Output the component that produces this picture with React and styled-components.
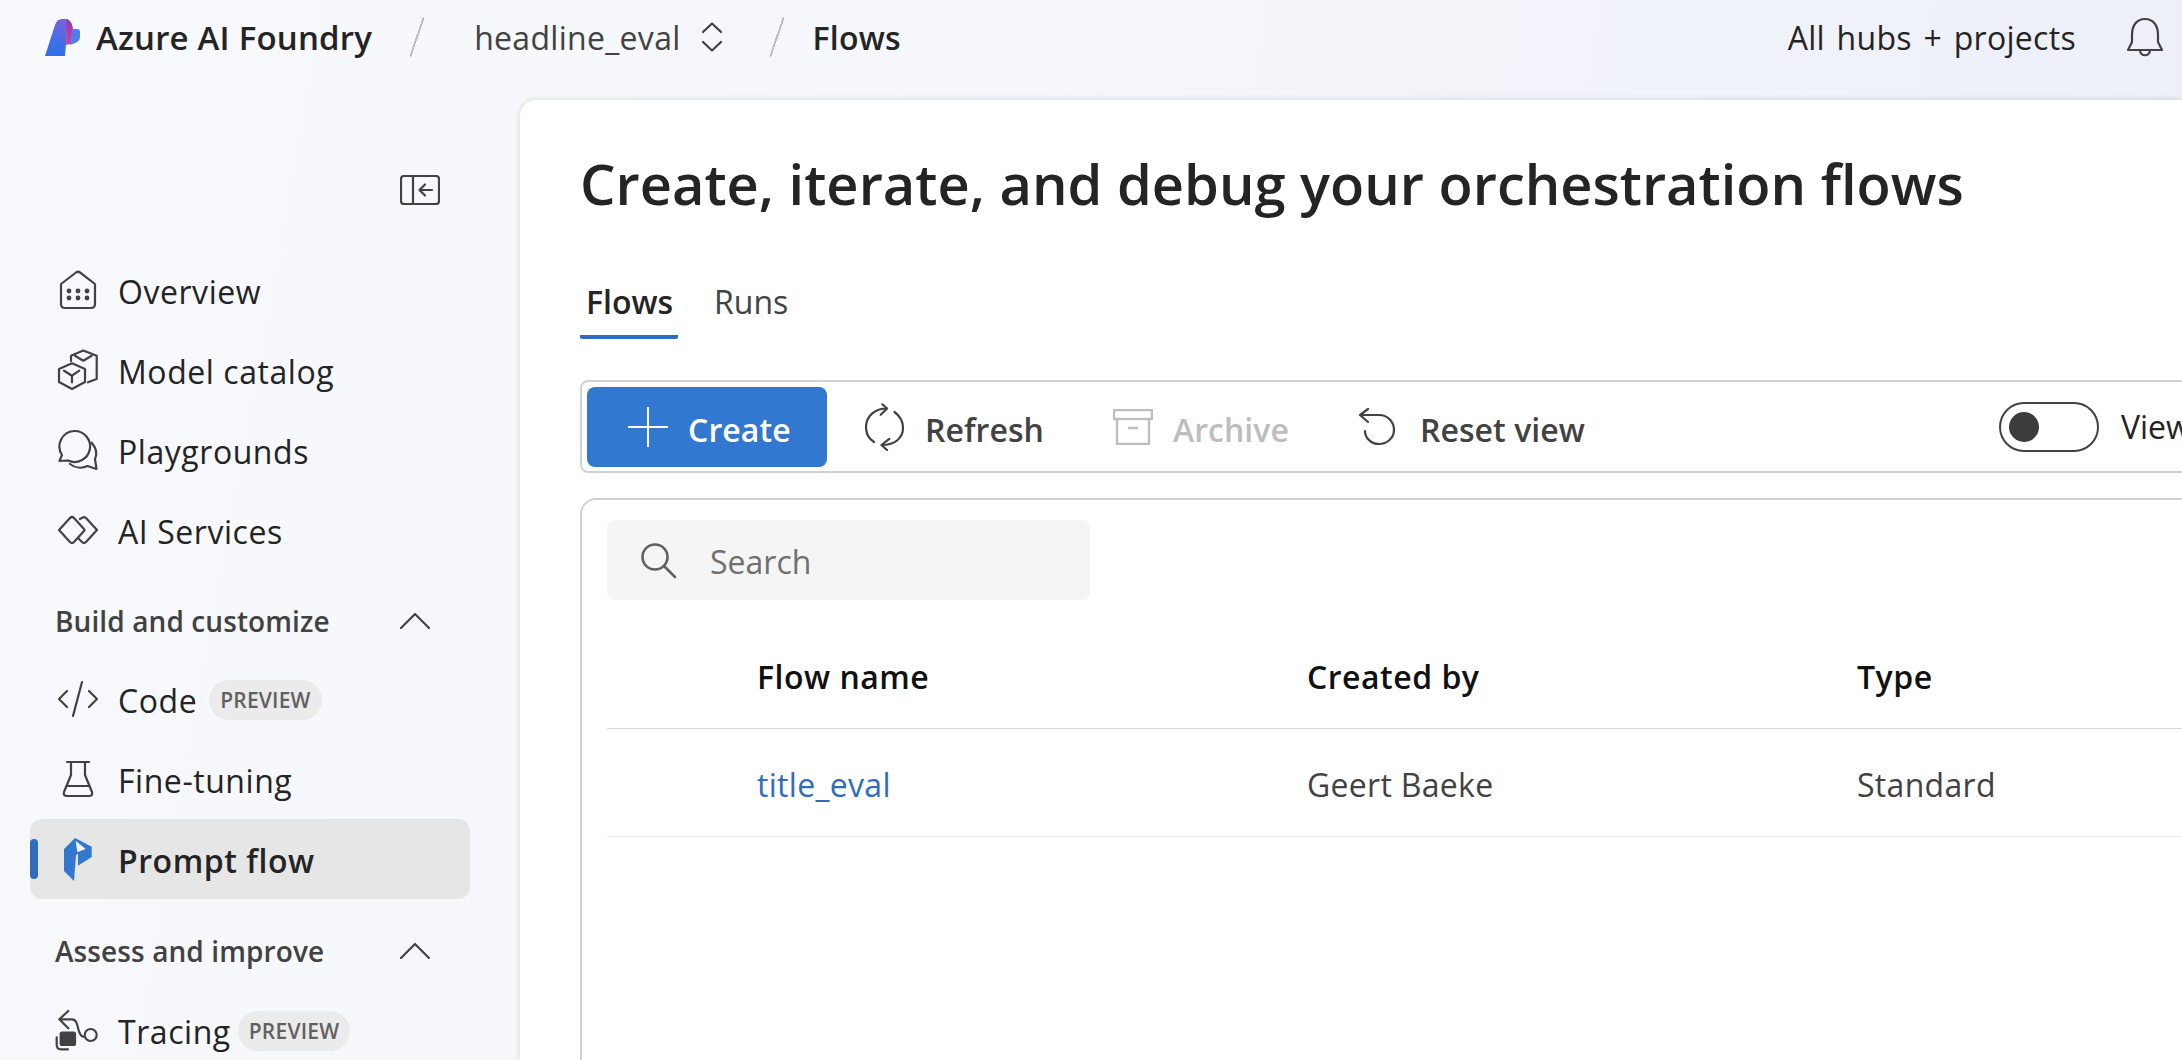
import React from "react";
import styled, { createGlobalStyle } from "styled-components";

const GlobalStyle = createGlobalStyle`
  html, body { margin: 0; padding: 0; height: 100%; overflow: hidden; }
  body { font-family: "Open Sans", "Noto Sans", sans-serif; color: #242424; }
  #root { height: 100%; }
`;

const Page = styled.div`
  width: 2182px;
  height: 1060px;
  overflow: hidden;
  display: flex;
  flex-direction: column;
  background: linear-gradient(100deg, #f7f9fd 0%, #f5f7fb 40%, #eceff8 100%);
`;

const Header = styled.header`
  height: 100px;
  flex: none;
  display: flex;
  align-items: center;
  padding: 0 18px 26px 45px;
  box-sizing: border-box;
`;

const Brand = styled.div`
  display: flex;
  align-items: center;
  gap: 15px;
  font-size: 33px;
  font-weight: 600;
  letter-spacing: 0.2px;
`;

const Slash = styled.div`
  width: 14px;
  height: 40px;
  margin: ${(p) => p.$margin};
  background: linear-gradient(to bottom right, transparent calc(50% - 1px), #bdbdbd calc(50% - 1px), #bdbdbd calc(50% + 1px), transparent calc(50% + 1px));
`;

const Crumb = styled.span`
  font-size: 32px;
  color: #424242;
  letter-spacing: 0.3px;
`;

const ChevronSlot = styled.span`
  width: 40px;
  height: 40px;
  margin-left: 11px;
  display: flex;
  align-items: center;
  justify-content: center;
`;

const CurrentCrumb = styled.span`
  font-size: 32px;
  font-weight: 600;
  letter-spacing: 0.2px;
`;

const HeaderRight = styled.div`
  margin-left: auto;
  display: flex;
  align-items: center;
  gap: 50px;
  font-size: 32px;
  letter-spacing: 0.3px;
  word-spacing: 3px;
`;

const Body = styled.div`
  flex: 1;
  display: flex;
  min-height: 0;
`;

const Sidebar = styled.nav`
  width: 520px;
  flex: none;
  padding: 0 0 0 30px;
  box-sizing: border-box;
`;

const CollapseRow = styled.div`
  height: 150px;
  width: 410px;
  display: flex;
  justify-content: flex-end;
  padding-top: 75px;
  box-sizing: border-box;
`;

const NavItem = styled.div`
  position: relative;
  width: 440px;
  height: 80px;
  display: flex;
  align-items: center;
  gap: 20px;
  padding: 2px 0 0 28px;
  box-sizing: border-box;
  border-radius: 12px;
  font-size: 32px;
  letter-spacing: 0.55px;
  background: ${(p) => (p.$active ? "#e6e6e6" : "transparent")};
  font-weight: ${(p) => (p.$active ? 600 : 400)};
  &::before {
    content: "";
    display: ${(p) => (p.$active ? "block" : "none")};
    position: absolute;
    left: 0;
    top: 20px;
    width: 8px;
    height: 40px;
    border-radius: 4px;
    background: #2f6cbd;
  }
`;

const IconSlot = styled.span`
  width: 40px;
  height: 40px;
  flex: none;
  margin-top: -2px;
  display: flex;
  align-items: center;
  justify-content: center;
  svg { display: block; overflow: visible; }
`;

const Pill = styled.span`
  height: 40px;
  display: flex;
  align-items: center;
  padding: 0 11px;
  margin-left: ${(p) => p.$shift || "-8px"};
  border-radius: 20px;
  background: #ebebeb;
  color: #616161;
  font-size: 21px;
  font-weight: 600;
  letter-spacing: 0.2px;
`;

const SectionTitle = styled.div`
  width: 400px;
  height: 60px;
  margin: ${(p) => p.$margin};
  padding-left: 25px;
  box-sizing: border-box;
  display: flex;
  align-items: center;
  justify-content: space-between;
  font-size: 28px;
  font-weight: 600;
  letter-spacing: 0.1px;
  color: #424242;
`;

const Main = styled.main`
  flex: 1;
  background: #fff;
  border-top-left-radius: 16px;
  box-shadow: 0 0 6px rgba(0, 0, 0, 0.14);
  padding: 0 0 0 60px;
  overflow: hidden;
`;

const Title = styled.h1`
  margin: 45px 0 0;
  font-size: 56px;
  line-height: 76px;
  font-weight: 600;
  color: #242424;
  white-space: nowrap;
`;

const Tabs = styled.div`
  display: flex;
  margin-top: 48px;
  height: 70px;
`;

const Tab = styled.div`
  width: ${(p) => p.$width};
  padding-left: 6px;
  box-sizing: border-box;
  font-size: 32px;
  line-height: 66px;
  font-weight: ${(p) => (p.$active ? 600 : 400)};
  color: ${(p) => (p.$active ? "#242424" : "#424242")};
  border-bottom: ${(p) => (p.$active ? "4px solid #2f6cbd" : "none")};
  border-radius: 2px;
  margin-right: 30px;
`;

const Toolbar = styled.div`
  width: 1700px;
  height: 93px;
  margin-top: 41px;
  border: 2px solid #d1d1d1;
  border-radius: 8px;
  box-sizing: border-box;
  display: flex;
  align-items: center;
  padding: 0 5px;
  gap: 38px;
`;

const PrimaryButton = styled.div`
  width: 240px;
  height: 80px;
  border-radius: 8px;
  background: #3277d0;
  color: #fff;
  display: flex;
  align-items: center;
  gap: 19px;
  padding-left: 40px;
  box-sizing: border-box;
  font-size: 32px;
  font-weight: 600;
  letter-spacing: 0.1px;
`;

const ToolButton = styled.div`
  display: flex;
  align-items: center;
  gap: ${(p) => p.$gap || "20px"};
  font-size: 32px;
  font-weight: 600;
  letter-spacing: 0.05px;
  color: ${(p) => (p.$disabled ? "#bdbdbd" : "#424242")};
  & + & { margin-left: 31px; }
`;

const ButtonLabel = styled.span`
  margin-top: 5px;
`;

const ToggleWrap = styled.div`
  margin-left: 376px;
  display: flex;
  align-items: center;
  gap: 22px;
  font-size: 32px;
  color: #242424;
`;

const Toggle = styled.div`
  width: 100px;
  height: 50px;
  border: 2px solid #424242;
  border-radius: 25px;
  box-sizing: border-box;
  display: flex;
  align-items: center;
  padding-left: 8px;
  &::before {
    content: "";
    width: 30px;
    height: 30px;
    border-radius: 50%;
    background: #3c3c3c;
  }
`;

const TableCard = styled.div`
  width: 1700px;
  height: 700px;
  margin-top: 25px;
  border: 2px solid #d1d1d1;
  border-radius: 16px;
  box-sizing: border-box;
  padding: 20px 0 0 25px;
`;

const SearchBox = styled.div`
  width: 483px;
  height: 80px;
  border-radius: 8px;
  background: #f5f5f5;
  display: flex;
  align-items: center;
  gap: 33px;
  padding: 2px 0 0 34px;
  box-sizing: border-box;
  font-size: 32px;
  color: #707070;
`;

const Row = styled.div`
  display: grid;
  grid-template-columns: 550px 550px 1fr;
  padding: ${(p) => (p.$head ? "24px" : "4px")} 0 0 150px;
  box-sizing: border-box;
  height: ${(p) => p.$height};
  align-items: center;
  border-bottom: 1px solid ${(p) => (p.$head ? "#d6d6d6" : "#ebebeb")};
  font-size: 32px;
  font-weight: ${(p) => (p.$head ? 600 : 400)};
  color: ${(p) => (p.$head ? "#111" : "#424242")};
  letter-spacing: ${(p) => (p.$head ? "0.5px" : "0.3px")};
`;

const FlowLink = styled.span`
  color: #2f6cbd;
`;

const stroke = { fill: "none", stroke: "#424242", strokeWidth: 2.2, strokeLinecap: "round", strokeLinejoin: "round" };

const Logo = () => (
  <svg width="36" height="37" viewBox="0 0 36 37">
    <defs>
      <linearGradient id="lg1" x1="0.6" y1="0" x2="0.4" y2="1">
        <stop offset="0" stopColor="#7a62dc" />
        <stop offset="0.6" stopColor="#3f6fe6" />
        <stop offset="1" stopColor="#2f6ee8" />
      </linearGradient>
      <linearGradient id="lg2" x1="0" y1="0" x2="0" y2="1">
        <stop offset="0" stopColor="#8f3aa8" />
        <stop offset="1" stopColor="#dd3aa8" />
      </linearGradient>
    </defs>
    <path d="M0 37 L10 6 Q12 0 17 0 L23 0 L20 37 Z" fill="url(#lg1)" />
    <path d="M22 0 Q27 2 28 10 L28 24 L21 26 Z" fill="url(#lg2)" />
    <path d="M27 10 L32 10 Q35 10 35 13 L35 18 Q35 22 30 24 L25 26 Z" fill="#4f7fe8" />
  </svg>
);

const ChevronUpDown = () => (
  <svg width="24" height="30" viewBox="0 0 24 30" {...stroke}>
    <path d="M3 10 L12 1.5 L21 10" />
    <path d="M3 20 L12 28.5 L21 20" />
  </svg>
);

const Bell = () => (
  <svg width="38" height="40" viewBox="0 0 38 40" {...stroke}>
    <path d="M6 18 C6 8 11 2 19 2 C27 2 32 8 32 18 L32 25 L36 33 L2 33 L6 25 Z" />
    <path d="M14 33 C14 40 24 40 24 33" />
  </svg>
);

const CollapseIcon = () => (
  <svg width="40" height="30" viewBox="0 0 40 30" {...stroke}>
    <rect x="1" y="1" width="38" height="28" rx="3" />
    <path d="M13 1 V29" />
    <path d="M32 15 H20 M25 9.5 L19.5 15 L25 20.5" />
  </svg>
);

const HomeIcon = () => (
  <svg width="36" height="38" viewBox="0 0 36 38" {...stroke}>
    <path d="M1 13 L16 1.5 Q18 0 20 1.5 L35 13 V33 Q35 37 31 37 H5 Q1 37 1 33 Z" />
    <g fill="#424242" stroke="none">
      {[9, 18, 27].map((x) => (
        <React.Fragment key={x}>
          <circle cx={x} cy="20" r="2.4" />
          <circle cx={x} cy="27" r="2.4" />
        </React.Fragment>
      ))}
    </g>
  </svg>
);

const CubesIcon = () => (
  <svg width="40" height="40" viewBox="0 0 40 40" {...stroke}>
    <path d="M1 19 L14 13.3 L27 19 V32 L14 39 L1 32 Z" />
    <path d="M6 20.7 L14 25.7 L21.3 20.7 M14 25.7 V32.3" />
    <path d="M13 11 V5.7 L25.3 0.5 L38.7 5.7 V29 L30 32.3" />
    <path d="M17 5.7 L25.3 10.7 L33.7 5.7" />
  </svg>
);

const ChatIcon = () => (
  <svg width="40" height="40" viewBox="0 0 40 40" {...stroke}>
    <path d="M16 1 A15.5 15.5 0 1 1 10 30.5 L1.5 31 L4 25 A15.5 15.5 0 0 1 16 1 Z" />
    <path d="M33.7 12.7 C38 18 39.5 24 37 29 L38.5 39 L29.5 36 C24 38.5 17 38 12 34" />
  </svg>
);

const DiamondsIcon = () => (
  <svg width="40" height="28" viewBox="0 0 40 28" {...stroke}>
    <path d="M1 14 L12 2 Q14 0 16 2 L26 13 Q27 14 26 15 L16 26 Q14 28 12 26 Z" />
    <path d="M22 3 L24 2 Q26 0 28 2 L39 14 L28 26 Q26 28 24 26 L21 23" />
  </svg>
);

const CodeIcon = () => (
  <svg width="40" height="36" viewBox="0 0 40 36" {...stroke}>
    <path d="M9 10 L1 18 L9 26 M31 10 L39 18 L31 26 M24 1 L15 35" />
  </svg>
);

const FlaskIcon = () => (
  <svg width="30" height="36" viewBox="0 0 30 36" {...stroke}>
    <path d="M4 1 H26 M8 1 V14 L1 31 Q0 35 4 35 H26 Q30 35 29 31 L22 14 V1" />
    <path d="M4 25 H26" />
  </svg>
);

const PromptFlowIcon = () => (
  <svg width="28" height="43" viewBox="0 0 28 43">
    <path d="M0 11 L11 0 L27.7 8.7 V19 L14 27.7 V16 L12 17 L10 43 L0 33 Z" fill="#3277d0" />
    <path d="M11.7 2.7 L21.7 11 L13.3 14.3 Z" fill="#f4f4f4" />
  </svg>
);

const TraceIcon = () => (
  <svg width="44" height="40" viewBox="0 0 44 40" {...stroke}>
    <path d="M12.3 1 L3.3 9.3 L12.3 18.3 M4 9.3 H15.7 C24 9.3 20 25 27.3 26.7" />
    <circle cx="34.7" cy="25" r="6" />
    <rect x="4.7" y="22.7" width="14.3" height="12.3" rx="1.5" fill="#424242" />
    <path d="M0.7 27.3 V35 Q0.7 39.3 5 39.3 H12" />
  </svg>
);

const ChevronUp = () => (
  <svg width="30" height="16" viewBox="0 0 30 16" {...stroke}>
    <path d="M1 15 L15 1 L29 15" />
  </svg>
);

const PlusIcon = () => (
  <svg width="42" height="42" viewBox="0 0 42 42" fill="none" stroke="#fff" strokeWidth="2">
    <path d="M21 1 V41 M1 21 H41" />
  </svg>
);

const RefreshIcon = () => (
  <svg width="40" height="48" viewBox="0 0 40 48" {...stroke}>
    <path d="M22 5.5 C10 5.5 1 13 1 24 C1 30 4 36 9 39" />
    <path d="M29.5 9 C35 13 38 18 38 25 C38 35 30 42 17 42" />
    <path d="M17.4 1.3 L22 5.5 L15.7 11.7 M24.3 35.8 L16.4 42 L22 47" />
  </svg>
);

const ArchiveIcon = () => (
  <svg width="40" height="36" viewBox="0 0 40 36" fill="none" stroke="#bdbdbd" strokeWidth="2.4">
    <rect x="1" y="1" width="38" height="9" />
    <path d="M4 10 V35 H36 V10 M15 19 H25" />
  </svg>
);

const ResetIcon = () => (
  <svg width="38" height="38" viewBox="0 0 38 38" {...stroke}>
    <path d="M10 1 L2 7 L10 14 M2 7 H21 C30 7 36 14 36 22 C36 30 29 36 21 36 C13 36 7 30 7 23" />
  </svg>
);

const SearchIcon = () => (
  <svg width="36" height="36" viewBox="0 0 36 36" fill="none" stroke="#616161" strokeWidth="2.6" strokeLinecap="round">
    <circle cx="14" cy="14" r="12.5" />
    <path d="M23 23 L34 34" />
  </svg>
);

const topItems = [
  ["Overview", <HomeIcon />],
  ["Model catalog", <CubesIcon />],
  ["Playgrounds", <ChatIcon />],
  ["AI Services", <DiamondsIcon />],
];

export default function App() {
  return (
    <Page>
      <GlobalStyle />
      <Header>
        <Brand>
          <Logo />
          Azure AI Foundry
        </Brand>
        <Slash $margin="0 50px 0 38px" />
        <Crumb>headline_eval</Crumb>
        <ChevronSlot>
          <ChevronUpDown />
        </ChevronSlot>
        <Slash $margin="0 29px 0 38px" />
        <CurrentCrumb>Flows</CurrentCrumb>
        <HeaderRight>
          <span>All hubs + projects</span>
          <Bell />
        </HeaderRight>
      </Header>
      <Body>
        <Sidebar>
          <CollapseRow>
            <CollapseIcon />
          </CollapseRow>
          {topItems.map(([label, icon]) => (
            <NavItem key={label}>
              <IconSlot>{icon}</IconSlot>
              {label}
            </NavItem>
          ))}
          <SectionTitle $margin="21px 0 8px">
            Build and customize
            <ChevronUp />
          </SectionTitle>
          <NavItem>
            <IconSlot>
              <CodeIcon />
            </IconSlot>
            Code
            <Pill>PREVIEW</Pill>
          </NavItem>
          <NavItem>
            <IconSlot>
              <FlaskIcon />
            </IconSlot>
            Fine-tuning
          </NavItem>
          <NavItem $active>
            <IconSlot>
              <PromptFlowIcon />
            </IconSlot>
            Prompt flow
          </NavItem>
          <SectionTitle $margin="22px 0 9px">
            Assess and improve
            <ChevronUp />
          </SectionTitle>
          <NavItem>
            <IconSlot>
              <TraceIcon />
            </IconSlot>
            Tracing
            <Pill $shift="-13px">PREVIEW</Pill>
          </NavItem>
        </Sidebar>
        <Main>
          <Title>Create, iterate, and debug your orchestration flows</Title>
          <Tabs>
            <Tab $active $width="98px">Flows</Tab>
            <Tab $width="100px">Runs</Tab>
          </Tabs>
          <Toolbar>
            <PrimaryButton>
              <PlusIcon />
              <ButtonLabel>Create</ButtonLabel>
            </PrimaryButton>
            <ToolButton>
              <RefreshIcon />
              <ButtonLabel>Refresh</ButtonLabel>
            </ToolButton>
            <ToolButton $disabled>
              <ArchiveIcon />
              <ButtonLabel>Archive</ButtonLabel>
            </ToolButton>
            <ToolButton $gap="24px">
              <ResetIcon />
              <ButtonLabel>Reset view</ButtonLabel>
            </ToolButton>
            <ToggleWrap>
              <Toggle />
              View
            </ToggleWrap>
          </Toolbar>
          <TableCard>
            <SearchBox>
              <SearchIcon />
              Search
            </SearchBox>
            <Row $head $height="129px">
              <span>Flow name</span>
              <span>Created by</span>
              <span>Type</span>
            </Row>
            <Row $height="108px">
              <FlowLink>title_eval</FlowLink>
              <span>Geert Baeke</span>
              <span>Standard</span>
            </Row>
          </TableCard>
        </Main>
      </Body>
    </Page>
  );
}
